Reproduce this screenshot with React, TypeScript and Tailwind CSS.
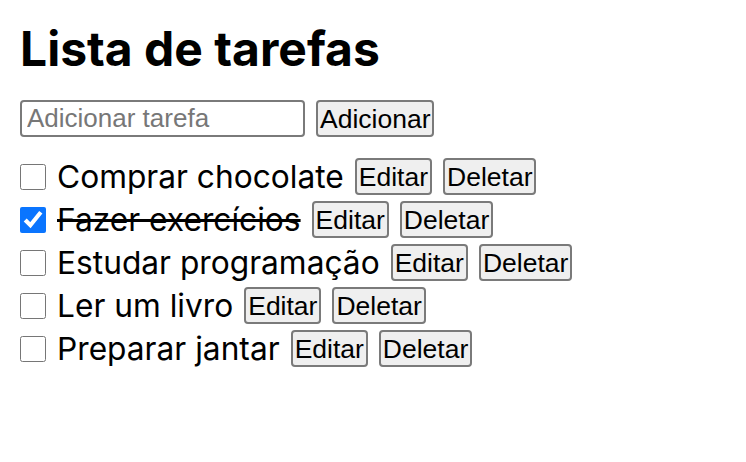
import { useState } from "react";

type Task = { id: number; text: string; done: boolean };

const initialTasks: Task[] = [
  { id: 1, text: "Comprar chocolate", done: false },
  { id: 2, text: "Fazer exercícios", done: true },
  { id: 3, text: "Estudar programação", done: false },
  { id: 4, text: "Ler um livro", done: false },
  { id: 5, text: "Preparar jantar", done: false },
];

const btn =
  "h-[37px] px-[2px] border-2 border-[#7a7a7a] rounded-[4px] bg-[#efefef] text-black text-[26.5px] leading-[30px] font-['Liberation_Sans',Arial,sans-serif]";

export default function App() {
  const [tasks, setTasks] = useState(initialTasks);
  const [draft, setDraft] = useState("");

  const toggle = (id: number) =>
    setTasks(tasks.map((t) => (t.id === id ? { ...t, done: !t.done } : t)));

  const remove = (id: number) => setTasks(tasks.filter((t) => t.id !== id));

  const add = () => {
    if (!draft.trim()) return;
    setTasks([...tasks, { id: Date.now(), text: draft.trim(), done: false }]);
    setDraft("");
  };

  return (
    <div className="min-h-screen bg-white px-[20px] pt-[20px] font-['Inter',sans-serif] text-black">
      <h1 className="text-[48px] leading-[58px] font-bold">Lista de tarefas</h1>

      <div className="mt-[22px] flex items-center gap-[11px]">
        <input
          value={draft}
          onChange={(e) => setDraft(e.target.value)}
          placeholder="Adicionar tarefa"
          className="w-[285px] h-[37px] px-[5px] border-2 border-[#7a7a7a] rounded-[4px] text-[26px] font-['Liberation_Sans',Arial,sans-serif] placeholder:text-[#777] outline-none"
        />
        <button onClick={add} className={btn}>
          Adicionar
        </button>
      </div>

      <ul className="mt-[21px] flex flex-col gap-[6px]">
        {tasks.map((t) => (
          <li key={t.id} className="flex items-center h-[37px] gap-[11px] text-[31.7px]">
            <input
              type="checkbox"
              checked={t.done}
              onChange={() => toggle(t.id)}
              className="w-[26px] h-[26px] m-0 accent-[#0a75ff]"
            />
            <span className={t.done ? "line-through" : ""}>{t.text}</span>
            <button className={btn}>Editar</button>
            <button onClick={() => remove(t.id)} className={btn}>
              Deletar
            </button>
          </li>
        ))}
      </ul>
    </div>
  );
}
